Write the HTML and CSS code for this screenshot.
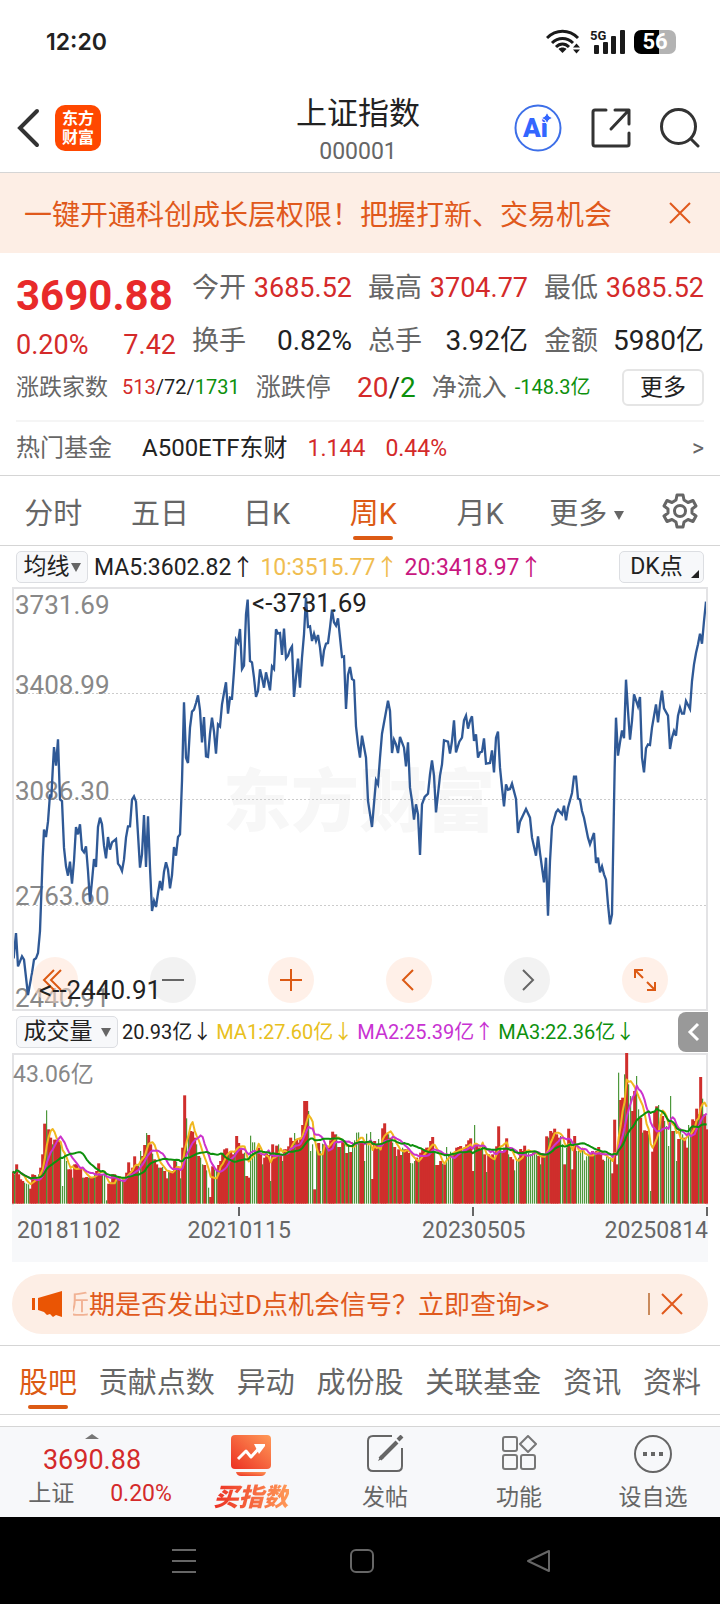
FILE: index.html
```
<!DOCTYPE html>
<html lang="zh-CN">

<head>
    <meta charset="utf-8">
    <meta name="viewport" content="width=device-width, initial-scale=1.0">
    <title>上证指数 000001</title>

    <link rel="stylesheet" href="styles.css">

</head>

<body>

    <div class="status">
        <span class="clock">12:20</span>
        <div class="status_icons">
            <svg width="36" height="26" viewBox="0 0 36 26" fill="none" stroke="#1a1a1a" stroke-width="3">
                <path d="M1 9C10 0 23 0 32 9M6 14C12 8 21 8 27 14M10 18C14 14 19 14 23 18" />
                <path d="M16.500 24L12.500 20C14.500 18 18.500 18 20.500 20Z" fill="#1a1a1a" stroke="none" />
                <path d="M30.500 14.500L34 18.500H27ZM30.500 24.500L34 20.500H27Z" fill="#1a1a1a" stroke="none" />
            </svg>
            <svg width="36" height="26" viewBox="0 0 36 26" fill="#1a1a1a">
                <text x="0" y="11" font-size="13" font-weight="700">5G</text>
                <rect x="4" y="16" width="5" height="9" rx="1" />
                <rect x="13" y="13" width="5" height="12" rx="1" />
                <rect x="21" y="7" width="5" height="18" rx="1" />
                <rect x="30" y="1" width="5" height="24" rx="1" />
            </svg>
            <span class="battery">56</span>
        </div>
    </div>

    <header class="top">
        <div class="top_left">
            <button class="icon_btn" aria-label="返回">
                <svg width="24" height="40" viewBox="0 0 24 40" fill="none" stroke="#333" stroke-width="4">
                    <path d="M21 3L4 20L21 37" stroke-linecap="round" />
                </svg>
            </button>
            <a class="logo" href="#">东方<br>财富</a>
        </div>
        <div class="top_title">
            <h1>上证指数</h1>
            <p>000001</p>
        </div>
        <div class="top_right">
            <button class="icon_btn" aria-label="AI">
                <svg width="48" height="48" viewBox="0 0 48 48">
                    <circle cx="24" cy="24" r="22.500" fill="none" stroke="#3d6fe8" stroke-width="2" />
                    <text class="ai" x="9" y="33">Ai</text>
                    <path d="M33 8Q34 13 39 14Q34 15 33 20Q32 15 27 14Q32 13 33 8Z" fill="#3366ff" stroke="#fff" />
                </svg>
            </button>
            <button class="icon_btn" aria-label="分享">
                <svg width="40" height="40" viewBox="0 0 40 40" fill="none" stroke="#333" stroke-width="3" stroke-linecap="round" stroke-linejoin="round">
                    <path d="M15 2H4Q2 2 2 4V36Q2 38 4 38H36Q38 38 38 36V25M24 2H38V16M37 3L20 21" />
                </svg>
            </button>
            <button class="icon_btn" aria-label="搜索">
                <svg width="40" height="40" viewBox="0 0 40 40" fill="none" stroke="#333" stroke-width="3" stroke-linecap="round">
                    <circle cx="18.500" cy="18.500" r="17" />
                    <path d="M31 31L38 38" />
                </svg>
            </button>
        </div>
    </header>

    <div class="banner">
        <a href="#">一键开通科创成长层权限！把握打新、交易机会</a>
        <button class="icon_btn" aria-label="关闭">
            <svg width="22" height="22" viewBox="0 0 22 22" stroke="#e0591c" stroke-width="2">
                <path d="M1 1L21 21M21 1L1 21" />
            </svg>
        </button>
    </div>

    <main>
        <section class="quote">
            <div class="quote_grid">
                <div class="price">
                    <strong>3690.88</strong>
                    <p><span>0.20%</span><span>7.42</span></p>
                </div>
                <p class="cell">今开 <b class="up">3685.52</b></p>
                <p class="cell">最高 <b class="up">3704.77</b></p>
                <p class="cell">最低 <b class="up">3685.52</b></p>
                <p class="cell">换手 <b>0.82%</b></p>
                <p class="cell">总手 <b>3.92亿</b></p>
                <p class="cell">金额 <b>5980亿</b></p>
            </div>
            <div class="breadth">
                <p class="breadth_count">涨跌家数 <b><span class="up">513</span>/72/<span class="down">1731</span></b></p>
                <p class="breadth_limit">涨跌停 <b><span class="up">20</span>/<span class="down">2</span></b></p>
                <p class="breadth_flow">净流入 <b class="down">-148.3亿</b></p>
                <button class="more">更多</button>
            </div>
            <a class="fund" href="#">
                <span class="fund_label">热门基金</span>
                <span class="fund_name">A500ETF东财</span>
                <span class="up">1.144</span>
                <span class="up">0.44%</span>
                <span class="fund_go">&gt;</span>
            </a>
        </section>

        <nav class="periods">
            <button>分时</button>
            <button>五日</button>
            <button>日K</button>
            <button class="valgt">周K</button>
            <button>月K</button>
            <button class="periods_more">更多<i class="tri"></i></button>
            <button class="gear" aria-label="设置">
                <svg width="36" height="36" viewBox="0 0 36 36" fill="none" stroke="#666" stroke-width="3" stroke-linejoin="round">
                    <path d="M15 2H21L22 7L26 9.500L31 7.500L34 13L30 16V20L34 23L31 28.500L26 26.500L22 29L21 34H15L14 29L10 26.500L5 28.500L2 23L6 20V16L2 13L5 7.500L10 9.500L14 7Z" />
                    <circle cx="18" cy="18" r="5.500" />
                </svg>
            </button>
        </nav>

        <section class="chart">
            <div class="legend">
                <button class="chip">均线<i class="tri"></i></button>
                <span>MA5:3602.82↑</span>
                <span class="gold">10:3515.77↑</span>
                <span class="pink">20:3418.97↑</span>
                <button class="chip dk">DK点<i class="corner"></i></button>
            </div>

            <div class="plot">
                <svg viewBox="0 0 696 424">
                    <text class="watermark" x="211" y="239">东方财富</text>
                    <path d="M0 106.500H696M0 212.500H696M0 318.500H696" stroke="#ccc" stroke-dasharray="2 2" />
                    <g class="axis">
                        <text x="3" y="27">3731.69</text>
                        <text x="3" y="107">3408.99</text>
                        <text x="3" y="213">3086.30</text>
                        <text x="3" y="318">2763.60</text>
                        <text x="3" y="420">2440.91</text>
                    </g>
                    <svg width="696" height="424" viewBox="36 18 2088 1272">
                        <polyline class="kline" points="37,1058 41,1132 48,1056 54,1156 66,1126 72,1136 84,1242 96,1176 102,1136 108,1132 114,1116 120,1050 124,940 128,830 132,746 138,768 144,722 150,640 154,650 158,570 162,498 168,554 174,475 180,655 186,660 192,800 198,856 204,884 210,842 216,908 222,840 228,738 234,760 240,730 246,806 252,814 258,796 264,870 270,962 276,900 282,834 288,858 294,738 300,710 306,730 312,794 318,832 324,768 330,806 336,784 348,774 354,848 360,856 366,870 372,836 378,770 384,736 390,736 396,656 402,646 408,662 414,760 420,860 426,820 432,702 438,858 444,706 450,860 456,990 462,960 468,978 474,936 480,900 486,928 492,872 498,844 504,866 510,922 516,882 522,798 528,824 534,768 540,760 546,600 552,364 558,530 564,546 570,440 576,392 582,386 588,366 594,343 600,388 606,484 612,408 618,526 624,528 630,458 636,410 642,452 648,518 654,430 660,436 666,370 672,336 678,304 684,398 690,350 696,352 702,270 708,176 714,186 720,144 726,264 732,254 738,100 743,56 750,240 756,244 762,290 768,348 774,330 780,265 786,290 792,320 798,274 804,300 810,328 816,256 822,264 828,145 834,158 840,156 846,222 852,143 858,232 864,224 870,206 876,196 882,348 888,288 894,233 900,320 906,230 912,160 918,50 924,138 930,136 936,180 942,158 948,180 954,162 960,200 966,256 972,208 978,188 984,186 990,140 996,86 1002,124 1008,134 1014,112 1020,170 1026,228 1032,226 1038,384 1044,282 1050,258 1056,294 1062,298 1068,436 1074,490 1080,530
                            1086,464 1098,530 1104,660 1116,738 1128,598 1134,610 1140,530 1146,458 1164,359 1170,390 1176,516 1182,476 1188,490 1194,516 1200,468 1212,500 1218,556 1224,484 1230,620 1236,660 1242,716 1248,670 1254,700 1260,822 1266,670 1274,648 1284,638 1290,580 1296,538 1302,584 1308,694 1320,584 1326,550 1332,478 1344,482 1350,518 1356,480 1362,418 1368,514 1378,482 1386,470 1392,418 1398,404 1404,443 1410,420 1416,406 1422,480 1428,460 1434,530 1440,514 1446,512 1452,472 1458,548 1470,546 1476,508 1482,574 1488,470 1494,452 1500,560 1506,620 1512,676 1518,610 1524,626 1530,624 1536,608 1548,654 1554,756 1560,722 1578,684 1590,710 1596,770 1608,824 1614,766 1620,816 1632,904 1638,830 1644,1004 1650,840 1656,736 1668,694 1674,686 1686,700 1692,674 1698,718 1704,680 1716,636 1722,587 1728,587 1734,652 1740,656 1746,690 1752,710 1764,770 1770,790 1782,756 1788,846 1794,830 1800,874 1806,856 1812,880 1818,896 1824,970 1830,1030 1836,1000 1840,780 1844,560 1848,410 1854,524 1860,484 1866,448 1872,472 1878,296 1884,390 1890,476 1896,420 1902,340 1914,376 1920,348 1926,530 1932,574 1938,502 1944,490 1950,492 1956,440 1968,370 1974,424 1980,370 1986,329 1992,382 2004,404 2010,504 2016,470 2022,450 2028,464 2034,404 2040,380 2046,398 2052,398 2058,360 2070,384 2076,300 2082,250 2088,216 2094,190 2100,158 2106,188 2112,120 2118,62" />
                    </svg>
                    <rect x="1" y="1" width="694" height="422" fill="none" stroke="#e3e3e5" stroke-width="2" />
                </svg>
                <div class="tools">
                    <button aria-label="最早"><svg viewBox="0 0 46 46"><path d="M22 13L12 23L22 33M29 13L19 23L29 33" /></svg></button>
                    <button class="grey" aria-label="缩小"><svg viewBox="0 0 46 46"><path d="M12 23H34" /></svg></button>
                    <button aria-label="放大"><svg viewBox="0 0 46 46"><path d="M12 23H34M23 12V34" /></svg></button>
                    <button aria-label="向左"><svg viewBox="0 0 46 46"><path d="M27 13L17 23L27 33" /></svg></button>
                    <button class="grey" aria-label="向右"><svg viewBox="0 0 46 46"><path d="M19 13L29 23L19 33" /></svg></button>
                    <button aria-label="全屏"><svg viewBox="0 0 46 46"><path d="M13 21V13H21M13 13L21 21M33 25V33H25M33 33L25 25" /></svg></button>
                </div>
                <svg class="mark" viewBox="0 0 696 424">
                    <text x="240" y="25">&lt;-3731.69</text>
                    <text x="27" y="412">&lt;--2440.91</text>
                </svg>
            </div>

            <div class="legend volume_legend">
                <button class="chip wide">成交量<i class="tri"></i></button>
                <span>20.93亿↓</span>
                <span class="yellow">MA1:27.60亿↓</span>
                <span class="purple">MA2:25.39亿↑</span>
                <span class="down">MA3:22.36亿↓</span>
                <button class="drawer" aria-label="展开">
                    <svg width="30" height="40" viewBox="0 0 30 40" fill="none" stroke="#fff" stroke-width="3">
                        <path d="M20 12L12 20L20 28" />
                    </svg>
                </button>
            </div>

            <div class="plot">
                <svg viewBox="0 0 696 152">
                    <path d="M1 152V1H695V152" fill="none" stroke="#e3e3e5" stroke-width="2" />
                    <text class="vol_max" x="1" y="29">43.06亿</text>
                    <svg id="volume" width="696" height="151" viewBox="36 156 2088 453"></svg>
                </svg>
            </div>

            <div class="dates">
                <svg viewBox="0 0 696 12">
                    <path d="M227 2V11M461 2V11M695 2V11" stroke="#666" stroke-width="2" />
                </svg>
                <div class="dates_row">
                    <span>20181102</span>
                    <span>20210115</span>
                    <span>20230505</span>
                    <span>20250814</span>
                </div>
            </div>
        </section>

        <div class="signal">
            <svg width="32" height="28" viewBox="0 0 32 28" fill="#ea5504">
                <path d="M0 8H3V20H0ZM6 8L30 1V27L24 25L21 27L18 24L15 25L12 22L6 20Z" />
            </svg>
            <a href="#"><span class="fade">近</span>期是否发出过D点机会信号？立即查询&gt;&gt;</a>
            <button class="icon_btn" aria-label="关闭">
                <svg width="22" height="22" viewBox="0 0 22 22" stroke="#e0591c" stroke-width="2">
                    <path d="M1 1L21 21M21 1L1 21" />
                </svg>
            </button>
        </div>

        <nav class="sections">
            <button class="valgt">股吧</button>
            <button>贡献点数</button>
            <button>异动</button>
            <button>成份股</button>
            <button>关联基金</button>
            <button>资讯</button>
            <button>资料</button>
        </nav>
    </main>

    <footer class="bar">
        <a class="bar_index" href="#">
            <i class="tri_up"></i>
            <b>3690.88</b>
            <span>上证<em>0.20%</em></span>
        </a>
        <a class="bar_item buy" href="#">
            <svg width="42" height="42" viewBox="0 0 42 42">
                <defs>
                    <linearGradient id="hot" x1="0" y1="1" x2="1" y2="0">
                        <stop offset="0" stop-color="#ec3023" />
                        <stop offset="1" stop-color="#ff9a58" />
                    </linearGradient>
                </defs>
                <rect x="1" y="0" width="40" height="34" rx="4" fill="url(#hot)" />
                <path d="M6 37H36Q35 41 31 41H11Q7 41 6 37Z" fill="url(#hot)" />
                <path d="M8 24L16 16L21 22L31 11" fill="none" stroke="#fff" stroke-width="3" stroke-linejoin="round" />
                <path d="M24 9H35V11L29 19Z" fill="#fff" />
            </svg>
            <span>买指数</span>
        </a>
        <a class="bar_item" href="#">
            <svg width="42" height="42" viewBox="0 0 42 42" fill="none" stroke="#666" stroke-width="2">
                <path d="M28 1H9Q4 1 4 6V31Q4 36 9 36H33Q38 36 38 31V13" />
                <path d="M16 24L33 7" stroke-width="4" />
                <path d="M34 5L38 1" stroke-width="4" />
                <path d="M14 26L20 23L17 20Z" fill="#666" stroke="none" />
            </svg>
            <span>发帖</span>
        </a>
        <a class="bar_item" href="#">
            <svg width="42" height="42" viewBox="0 0 42 42" fill="none" stroke="#777" stroke-width="2">
                <rect x="5" y="2" width="14" height="14" rx="2" />
                <rect x="5" y="20" width="14" height="14" rx="2" />
                <rect x="23" y="20" width="14" height="14" rx="2" />
                <path d="M30 1L38 9L30 17L22 9Z" stroke-linejoin="round" />
            </svg>
            <span>功能</span>
        </a>
        <a class="bar_item" href="#">
            <svg width="42" height="42" viewBox="0 0 42 42" fill="none" stroke="#666" stroke-width="2">
                <circle cx="21" cy="19" r="18" />
                <path d="M11 19H15M19 19H23M27 19H31" stroke-width="4" />
            </svg>
            <span>设自选</span>
        </a>
    </footer>

    <div class="android">
        <svg viewBox="0 0 720 88" fill="none" stroke="#666" stroke-width="2">
            <path d="M172 33H196M172 44H196M172 55H196" />
            <rect x="351" y="33" width="22" height="22" rx="5" />
            <path d="M549 34V54L528 44Z" stroke-linejoin="round" />
        </svg>
    </div>

    <script src="chart.js"></script>
</body>

</html>
```
FILE: styles.css
```
* {
    box-sizing: border-box;
}

body {
    margin: 0;
    background: #fff;
    color: #222;
    font-family: Roboto, "Noto Sans CJK SC", sans-serif;
}

h1,
p {
    margin: 0;
    font-weight: 400;
}

b {
    font-weight: 400;
}

a {
    color: inherit;
    text-decoration: none;
}

svg {
    display: block;
    flex: none;
}

button {
    border: none;
    background: none;
    padding: 0;
    color: inherit;
    font-family: inherit;
    font-size: inherit;
    white-space: nowrap;
}

.up {
    color: #d42a2a;
}

.down {
    color: #0d900d;
}

/* status bar */

.status {
    display: flex;
    justify-content: space-between;
    align-items: center;
    height: 84px;
    padding: 0 44px 0 46px;
}

.clock {
    font-family: Inter, sans-serif;
    font-size: 23px;
    font-weight: 600;
}

.status_icons {
    display: flex;
    align-items: center;
    gap: 8px;
}

.battery {
    width: 42px;
    border-radius: 7px;
    background: linear-gradient(90deg, #000 60%, #b3b3b3 60%);
    color: #fff;
    font-size: 22px;
    font-weight: 700;
    line-height: 24px;
    text-align: center;
}

/* header */

.top {
    display: grid;
    grid-template-columns: 1fr auto 1fr;
    align-items: center;
    height: 89px;
    padding: 0 20px 0 16px;
    border-bottom: 1px solid #d5d5d5;
}

.top_left,
.top_right {
    display: flex;
    align-items: center;
    gap: 15px;
}

.top_right {
    justify-content: flex-end;
    gap: 29px;
}

.top_title {
    padding-top: 7px;
    text-align: center;
}

.top_title h1 {
    font-size: 31px;
    line-height: 40px;
}

.top_title p {
    color: #666;
    font-size: 23px;
    line-height: 36px;
}

.logo {
    width: 46px;
    height: 46px;
    padding-top: 4px;
    border-radius: 10px;
    background: #ff4800;
    color: #fff;
    font-size: 16px;
    font-weight: 700;
    line-height: 19px;
    text-align: center;
}

.ai {
    fill: #3366ff;
    font-size: 26px;
    font-weight: 900;
}

/* banner */

.banner {
    display: flex;
    justify-content: space-between;
    align-items: center;
    height: 80px;
    padding: 0 29px 0 24px;
    background: #fdeee5;
    color: #e0591c;
    font-size: 28px;
}

/* quote */

.quote {
    padding: 11px 16px 0;
    border-bottom: 1px solid #d5d5d5;
}

.quote_grid {
    display: grid;
    grid-template-columns: repeat(4, 1fr);
    column-gap: 16px;
}

.price {
    grid-row: span 2;
    padding-top: 6px;
    color: #d42a2a;
}

.price strong {
    display: block;
    color: #e82a2a;
    font-size: 42px;
    line-height: 52px;
}

.price p {
    display: flex;
    justify-content: space-between;
    font-size: 27px;
    line-height: 47px;
}

.cell {
    display: flex;
    justify-content: space-between;
    color: #666;
    font-size: 27px;
    line-height: 48px;
    white-space: nowrap;
}

.cell b:not(.up) {
    color: #222;
    font-size: 28px;
}

.breadth {
    display: flex;
    align-items: center;
    gap: 16px;
    padding-bottom: 14px;
    border-bottom: 2px solid #f5f5f5;
    color: #666;
    white-space: nowrap;
}

.breadth p {
    display: flex;
    align-items: center;
    gap: 8px;
    font-size: 25px;
    line-height: 37px;
}

.breadth b {
    color: #222;
    font-size: 20px;
}

.breadth b.down {
    color: #0d900d;
}

.breadth .breadth_count {
    flex-basis: 222px;
    gap: 14px;
    font-size: 23px;
}

.breadth_limit {
    flex-basis: 160px;
    justify-content: space-between;
}

.breadth .breadth_limit b {
    font-size: 28px;
}

.more {
    width: 82px;
    height: 37px;
    margin-left: auto;
    border: 2px solid #e5e5e5;
    border-radius: 6px;
    color: #222;
    font-size: 23px;
    line-height: 33px;
}

.fund {
    display: flex;
    align-items: center;
    gap: 20px;
    font-size: 24px;
    line-height: 53px;
}

.fund .up {
    font-size: 23px;
}

.fund_label {
    margin-right: 10px;
    color: #666;
}

.fund_go {
    margin-left: auto;
    color: #666;
    font-size: 23px;
}

/* tabs */

.periods,
.sections {
    display: flex;
    height: 70px;
    border-bottom: 1px solid #d5d5d5;
    color: #666;
    font-size: 29px;
}

.periods button,
.sections button {
    position: relative;
}

.periods button {
    flex: 4;
}

.periods_more .tri {
    margin-left: 7px;
}

.periods .gear {
    display: flex;
    flex: 3;
    justify-content: center;
    align-items: center;
}

.sections {
    justify-content: space-between;
    padding: 0 19px;
    border-top: 1px solid #d5d5d5;
}

.periods .valgt,
.sections .valgt {
    color: #dc5a14;
}

.valgt::after {
    content: "";
    position: absolute;
    left: 50%;
    bottom: 5px;
    width: 40px;
    height: 4px;
    margin-left: -20px;
    border-radius: 2px;
    background: #dc5a14;
}

.tri {
    display: inline-block;
    margin-left: 4px;
    border: 5px solid transparent;
    border-top: 9px solid #666;
    border-bottom: none;
    vertical-align: middle;
}

/* charts */

.chart {
    padding: 0 12px;
}

.legend {
    display: flex;
    align-items: center;
    gap: 6px;
    height: 41px;
    padding: 0 4px;
    font-size: 23px;
    white-space: nowrap;
}

.legend span {
    padding-bottom: 3px;
}

.chip {
    width: 72px;
    height: 32px;
    border: 1px solid #dcdee2;
    border-radius: 5px;
    background: #f7f8fa;
    line-height: 28px;
}

.chip .tri {
    margin-left: 1px;
}

.dk {
    position: relative;
    width: 85px;
    margin-left: auto;
    padding-right: 10px;
}

.corner {
    position: absolute;
    right: 4px;
    bottom: 4px;
    border-left: 8px solid transparent;
    border-bottom: 8px solid #222;
}

.gold {
    color: #f0bd50;
}

.pink {
    color: #c8187f;
}

.yellow {
    color: #e8c020;
}

.purple {
    color: #c832d2;
}

.volume_legend {
    gap: 4px;
    height: 42px;
    padding-right: 0;
    font-size: 20px;
}

.wide {
    width: 102px;
    font-size: 23px;
}

.wide .tri {
    margin-left: 8px;
}

.drawer {
    margin-left: auto;
    border-radius: 8px 0 0 8px;
    background: #999;
}

.plot {
    position: relative;
}

.plot > svg,
.dates svg {
    width: 100%;
}

.watermark {
    fill: #f7f7f7;
    font-size: 68px;
    font-weight: 900;
}

.axis,
.mark {
    fill: #888;
    font-size: 26px;
}

.mark {
    position: absolute;
    top: 0;
    left: 0;
    fill: #222;
    pointer-events: none;
}

.vol_max {
    fill: #888;
    font-size: 23px;
}

.kline {
    fill: none;
    stroke: #2f5996;
    stroke-width: 7;
}

.tools {
    position: absolute;
    right: 40px;
    bottom: 8px;
    left: 20px;
    display: flex;
    justify-content: space-between;
}

.tools button {
    width: 46px;
    height: 46px;
    border-radius: 50%;
    background: rgba(255, 226, 210, .5);
}

.tools .grey {
    background: rgba(230, 230, 230, .5);
}

.tools path {
    fill: none;
    stroke: #dc5a14;
    stroke-width: 2;
}

.tools .grey path {
    stroke: #666;
}

.bar_up {
    fill: #cf2e2c;
}

.bar_down {
    fill: #2a8416;
}

.ma {
    fill: none;
    stroke-width: 6;
    stroke-linejoin: round;
}

.dates {
    height: 57px;
    background: #f7f8fa;
}

/* columns end at the ticks above */
.dates_row {
    display: grid;
    grid-template-columns: 170fr 234fr 182fr auto;
    padding-left: 5px;
    color: #666;
    font-size: 23px;
    line-height: 27px;
}

/* signal pill */

.signal {
    display: flex;
    align-items: center;
    gap: 9px;
    height: 60px;
    margin: 12px 12px 11px;
    padding: 0 25px 0 20px;
    border-radius: 30px;
    background: #fdeee5;
    color: #e0591c;
    font-size: 26px;
    white-space: nowrap;
}

.signal a {
    flex: 1;
    overflow: hidden;
    padding-bottom: 4px;
    text-indent: -10px;
}

.fade {
    opacity: .4;
}

.signal .icon_btn {
    padding-left: 11px;
    border-left: 2px solid #c98a5c;
}

/* bottom bar */

.bar {
    display: flex;
    height: 91px;
    margin-top: 11px;
    border-top: 1px solid #d5d5d5;
    background: #f7f8fa;
    color: #666;
    font-size: 23px;
}

.bar_index {
    display: flex;
    flex: 184;
    flex-direction: column;
    align-items: center;
    padding-top: 7px;
    line-height: 34px;
}

.bar_index b {
    margin-top: 4px;
    color: #d42a2a;
    font-size: 27px;
}

.bar_index span {
    padding-left: 16px;
}

.bar_index em {
    margin-left: 36px;
    color: #d42a2a;
    font-style: normal;
}

.tri_up {
    border: 7px solid transparent;
    border-top: none;
    border-bottom: 5px solid #777;
}

.bar_item {
    display: flex;
    flex: 134;
    flex-direction: column;
    align-items: center;
    padding-top: 8px;
    line-height: 42px;
}

.buy span {
    background: linear-gradient(90deg, #ec3023, #ff9a58);
    -webkit-background-clip: text;
    background-clip: text;
    color: transparent;
    font-size: 25px;
    font-style: italic;
    font-weight: 900;
}

.android {
    background: #000;
}
```
FILE: chart.js
```
// top edge of each weekly bar, r = up week, g = down week
const weeks = `512r 520g 490r 520r 535r 540r 545g 548g 550g 563r 520r 522r 530r 520g 500r 460r 368r 328g 385r 410r 430g 416r 416r 420r 430g 555g 460g 480g 505r 505r
530g 490r 490r 500r 503r 530g 530r 528r 530g 528r 530r 522g 510r 487r 520r 522g 518g 598g 548r 548r 520r 520r 535g 530r 540g 535g 530r 515r 484r 510r
500r 466r 495r 490g 450g 465r 432r 396g 402r 430r 458g 475r 490r 500g 500r 498g 510r 532r 510g 512r 510r 480r 482g 505r 532g 440r 283r 352g 400g 390r
392r 410r 430g 465r 470g 490g 492r 508g 560g 588r 496r 505g 510g 492r 480r 458r 445r 442r 460g 452r 460r 450g 405r 426r 440r 458r 455g 525r 530r 404g
424g 424g 450g 440r 460r 490g 470r 458r 462r 540g 430r 460r 434r 430g 460r 480g 445r 445r 436r 410r 420r 396g 414r 425r 410r 372r 300r 300r 330g 450g
430g 565r 430g 426r 450g 428g 430r 440g 440r 418r 392r 400r 400g 438r 438g 420r 420g 456r 430g 453r 424g 418g 395g 394g
420r 425r 480g 398g 430g 393g 534r 420r 430r 414g 430r 382r 367r 396r 400g 410r 425g 438r 465g 445r 462r 440g 445r 445r 456r 486g 487g 480g 470r 480g
455r 445r 445r 440r 440r 420r 408r 450g 492r 492r 480r 488g 490r 438g 460g 452g 455g 460r 440r 438r 435r 450g 440r 430r 418r 412r 510r 372g 430r 440r
445r 436g 460r 513g 460r 470r 460r 470g 436r 376r 440g 450r 440r 412r 460g 468r 475r 508g 475g 470g 444r 450r 434r 455g 455g 460g 455g 458g 460g 465r
490g 460r 460g 406r 410g 390r 395r 383r 400r 410r 405g 430g 490r 440g 383r 420g 505r 405r 450g 450g 455g 450g 478g 466g 465g 460r 450r 455g 450r 438r
460r 476r 480g 466g 468g 470g 517r 356r 490r 215g 297r 290r 220g 156r 250g 285g 330r 270r 225g 325g 350r 395g 388r 390r 400g 570g 452r 330r 316r 312g
340g 345r 360g 375g 435g 285g 390r 390g 480g 414r 383g 400g 410r 440r 372g 380g 355r 360r 323r 340g 228r 293g 340r 385r`.split(/\s+/);

const dest = document.querySelector("#volume");
const tops = weeks.map(week => parseInt(week));
const step = 2082 / (weeks.length - 1);
const bottom = 608;

function add(name, attrs) {
    const elm = document.createElementNS("http://www.w3.org/2000/svg", name);
    Object.keys(attrs).forEach(key => elm.setAttribute(key, attrs[key]));
    dest.appendChild(elm);
}

function visBars(type, className, width) {
    weeks.forEach((week, i) => {
        if (week.endsWith(type)) {
            add("rect", {
                class: className,
                x: 38 + i * step - width / 2,
                y: tops[i],
                width: width,
                height: bottom - tops[i]
            });
        }
    });
}

function visAverage(days, color) {
    const points = tops.map((top, i) => {
        const part = tops.slice(Math.max(0, i - days + 1), i + 1);
        const avg = part.reduce((a, b) => a + b) / part.length;
        return (38 + i * step) + "," + avg;
    });
    add("polyline", { class: "ma", stroke: color, points: points.join(" ") });
}

visBars("r", "bar_up", 9);
visBars("g", "bar_down", 3);
visAverage(5, "#f0b820");
visAverage(10, "#cc33cc");
visAverage(20, "#0d900d");
```
